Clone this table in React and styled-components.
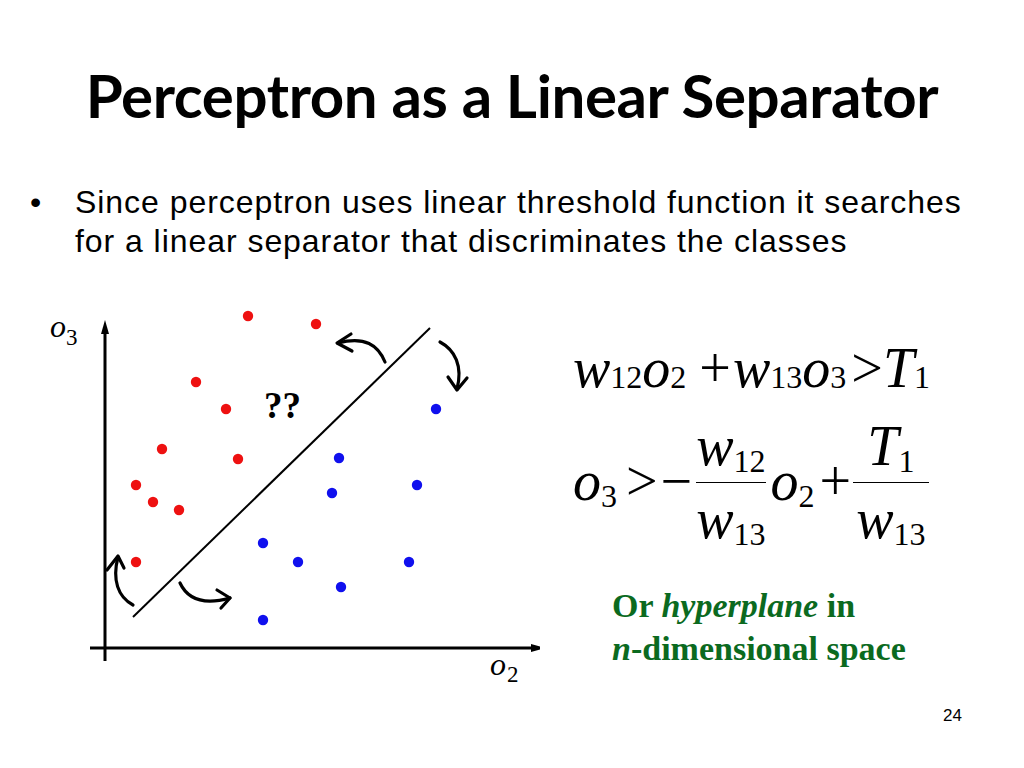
import React from "react";
import styled, { createGlobalStyle } from "styled-components";

const Global = createGlobalStyle`
  html, body { margin: 0; padding: 0; background: #fff; }
  body { width: 1024px; height: 768px; overflow: hidden; }
`;

const Slide = styled.div`
  position: relative;
  width: 1024px;
  height: 768px;
  background: #fff;
  display: flex;
  flex-direction: column;
  color: #000;
`;

const Title = styled.h1`
  margin: 0;
  padding-top: 62px;
  height: 84px;
  font-family: "Lato", "Open Sans", sans-serif;
  font-weight: 700;
  font-size: 60px;
  line-height: 66px;
  text-align: center;
  letter-spacing: -0.4px;
`;

const Bullets = styled.ul`
  list-style: none;
  margin: 37px 0 0 0;
  padding: 0 0 0 30px;
`;

const Bullet = styled.li`
  display: flex;
  font-family: "Liberation Sans", Arial, sans-serif;
  font-size: 32px;
  line-height: 39px;
  letter-spacing: 0.95px;
  &::before {
    content: "•";
    width: 45px;
    flex: none;
    letter-spacing: 0;
  }
`;

const BulletText = styled.span`
  max-width: 900px;
`;

const Content = styled.div`
  display: flex;
  margin-top: 39px;
  padding-left: 40px;
`;

const Figure = styled.svg`
  width: 500px;
  height: 400px;
  flex: none;
  display: block;
`;

const Right = styled.div`
  display: flex;
  flex-direction: column;
  padding-left: 33px;
  padding-top: 38px;
  font-family: "Liberation Serif", "Times New Roman", serif;
`;

const EqRow = styled.div`
  font-size: 56px;
  line-height: 60px;
  white-space: nowrap;
  margin-top: ${(p) => p.$mt || 0}px;
`;

const V = styled.i`
  font-style: italic;
`;

const Sub = styled.span`
  font-size: 32px;
  font-style: normal;
  line-height: 0;
  vertical-align: ${(p) => p.$drop || 0}px;
`;

const Op = styled.span`
  display: inline-block;
  margin-left: ${(p) => p.$l ?? 0}px;
  margin-right: ${(p) => p.$r ?? 0}px;
`;

const Frac = styled.span`
  display: inline-flex;
  flex-direction: column;
  align-items: center;
  vertical-align: 35px;
  margin-left: ${(p) => p.$l ?? 0}px;
  margin-right: ${(p) => p.$r ?? 0}px;
`;

const Num = styled.span`
  display: block;
  padding: 0 ${(p) => p.$pad ?? 0}px 6px;
  line-height: 60px;
`;

const Bar = styled.span`
  display: block;
  align-self: stretch;
  height: 0;
  border-top: 1.5px solid #000;
`;

const Den = styled.span`
  display: block;
  padding: 6px ${(p) => p.$pad ?? 0}px 0;
  line-height: 60px;
`;

const Note = styled.div`
  margin-top: 35px;
  padding-left: 39px;
  color: #0b6a1f;
  font-family: "Liberation Serif", "Times New Roman", serif;
  font-weight: 700;
  font-size: 34px;
  line-height: 43px;
`;

const PageNum = styled.div`
  position: absolute;
  right: 62px;
  bottom: 42px;
  font-family: "Liberation Sans", Arial, sans-serif;
  font-size: 17px;
`;

const red = [
  [248, 316], [316, 324], [196, 382], [226, 409], [162, 449], [238, 459],
  [136, 485], [153, 502], [179, 510], [136, 562],
];
const blue = [
  [436, 409], [339, 458], [332, 493], [417, 485], [263, 543], [298, 562],
  [409, 562], [341, 587], [263, 620],
];

function Chart() {
  return (
    <Figure viewBox="40 300 500 400">
      <line x1="105" y1="330" x2="105" y2="661" stroke="#000" strokeWidth="3" />
      <polygon points="105,320 101,334 109,334" fill="#000" />
      <line x1="90" y1="648" x2="535" y2="648" stroke="#000" strokeWidth="3" />
      <polygon points="545,648 531,644 531,652" fill="#000" />
      <line x1="133" y1="617" x2="430" y2="328" stroke="#000" strokeWidth="2" />
      {red.map(([x, y], i) => (
        <circle key={"r" + i} cx={x} cy={y} r="5.2" fill="#ee1111" />
      ))}
      {blue.map(([x, y], i) => (
        <circle key={"b" + i} cx={x} cy={y} r="5.2" fill="#1010ee" />
      ))}
      <g fill="none" stroke="#000" strokeWidth="3.2" strokeLinecap="round" strokeLinejoin="round">
        <path d="M385,362 C378,345 365,336 338,343" />
        <path d="M351,334 L337,343 L352,351" />
        <path d="M440,342 C455,350 463,366 457,389" />
        <path d="M448,377 L457,390 L467,378" />
        <path d="M133,605 C118,597 112,580 118,557" />
        <path d="M107,570 L118,556 L124,568" />
        <path d="M180,583 C188,600 205,605 230,598" />
        <path d="M217,590 L230,598 L221,608" />
      </g>
      <text x="50" y="337" fontFamily="Liberation Serif, serif" fontStyle="italic" fontSize="32">o</text>
      <text x="66" y="345" fontFamily="Liberation Serif, serif" fontSize="23">3</text>
      <text x="490" y="675" fontFamily="Liberation Serif, serif" fontStyle="italic" fontSize="32">o</text>
      <text x="507" y="682" fontFamily="Liberation Serif, serif" fontSize="23">2</text>
      <text x="264" y="418" fontFamily="Liberation Serif, serif" fontWeight="700" fontSize="37">??</text>
    </Figure>
  );
}

export default function App() {
  return (
    <>
      <Global />
      <Slide>
        <Title>Perceptron as a Linear Separator</Title>
        <Bullets>
          <Bullet>
            <BulletText>
              Since perceptron uses linear threshold function it searches for a
              linear separator that discriminates the classes
            </BulletText>
          </Bullet>
        </Bullets>
        <Content>
          <Chart />
          <Right>
            <EqRow>
              <V>w</V><Sub $drop={-1}>12</Sub><V>o</V><Sub $drop={-1}>2</Sub>
              <Op $l={13} $r={2}>+</Op>
              <V>w</V><Sub $drop={-1}>13</Sub><V>o</V><Sub $drop={-1}>3</Sub>
              <Op $l={5} $r={0}>&gt;</Op>
              <V>T</V><Sub $drop={-1}>1</Sub>
            </EqRow>
            <EqRow $mt={18}>
              <V>o</V><Sub $drop={-7}>3</Sub>
              <Op $l={9} $r={3}>&gt;</Op>
              <Op>−</Op>
              <Frac $l={4} $r={5}>
                <Num><V>w</V><Sub $drop={-7}>12</Sub></Num>
                <Bar />
                <Den><V>w</V><Sub $drop={-7}>13</Sub></Den>
              </Frac>
              <V>o</V><Sub $drop={-7}>2</Sub>
              <Op $l={5} $r={0}>+</Op>
              <Frac $l={2}>
                <Num $pad={3}><V>T</V><Sub $drop={-7}>1</Sub></Num>
                <Bar />
                <Den $pad={3}><V>w</V><Sub $drop={-7}>13</Sub></Den>
              </Frac>
            </EqRow>
            <Note>
              Or <i>hyperplane</i> in
              <br />
              <i>n</i>-dimensional space
            </Note>
          </Right>
        </Content>
        <PageNum>24</PageNum>
      </Slide>
    </>
  );
}
